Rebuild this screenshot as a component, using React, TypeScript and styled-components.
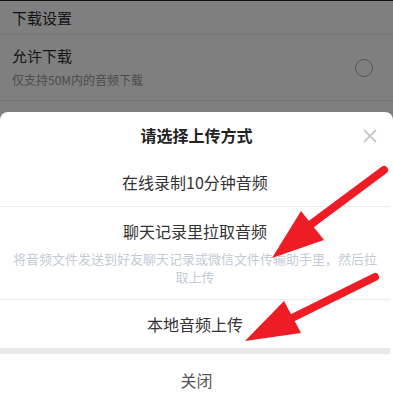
import styled, { createGlobalStyle } from 'styled-components'

const GlobalStyle = createGlobalStyle`
  html, body { margin: 0; padding: 0; }
  body { font-family: "Noto Sans CJK SC", "Liberation Sans", sans-serif; }
`

const Page = styled.div`
  position: relative;
  width: 393px;
  height: 415px;
  overflow: hidden;
  background: #7f7f7f;
  border-top: 1px solid #111;
  box-sizing: border-box;
`

const SectionHead = styled.div`
  height: 33px;
  padding-left: 12px;
  display: flex;
  align-items: center;
  font-size: 15px;
  color: #141414;
  border-bottom: 1px solid #757575;
`

const SettingRow = styled.div`
  height: 65px;
  padding: 0 20px 0 12px;
  display: flex;
  align-items: center;
  justify-content: space-between;
  border-bottom: 1px solid #757575;
`

const SettingText = styled.div`
  display: flex;
  flex-direction: column;
  gap: 6px;
  margin-top: -1px;
`

const SettingTitle = styled.div`
  font-size: 15px;
  color: #151515;
  line-height: 20px;
`

const SettingSub = styled.div`
  font-size: 12px;
  color: #4c4c4c;
  line-height: 16px;
`

const Radio = styled.div`
  width: 16px;
  height: 16px;
  border-radius: 50%;
  border: 1px solid #555;
`

const Sheet = styled.div`
  position: absolute;
  left: 0;
  right: 0;
  bottom: 0;
  height: 303px;
  background: #fff;
  border-radius: 8px 8px 0 0;
  display: flex;
  flex-direction: column;
`

const SheetHead = styled.div`
  position: relative;
  height: 46px;
  display: flex;
  align-items: center;
  justify-content: center;
  font-size: 16px;
  font-weight: bold;
  color: #222;
`

const CloseX = styled.svg`
  position: absolute;
  right: 16px;
  top: 17px;
`

const Option = styled.div<{ $last?: boolean }>`
  padding: 13px 12px;
  margin-right: 3px;
  text-align: center;
  border-bottom: ${p => (p.$last ? 'none' : '1px solid #ececec')};
`

const OptionTitle = styled.div`
  font-size: 16px;
  line-height: 22px;
  color: #333;
`

const OptionHint = styled.div`
  margin-top: 8px;
  font-size: 13px;
  line-height: 18px;
  color: #c5cad5;
`

const Gap = styled.div`
  height: 6px;
  margin-right: 3px;
  background: #e9e9e9;
`

const CloseBtn = styled.div`
  height: 52px;
  display: flex;
  align-items: center;
  justify-content: center;
  font-size: 16px;
  color: #555;
`

const Marks = styled.svg`
  position: absolute;
  left: 0;
  top: 0;
  pointer-events: none;
`

export default function App() {
  return (
    <>
      <GlobalStyle />
      <Page>
        <SectionHead>下载设置</SectionHead>
        <SettingRow>
          <SettingText>
            <SettingTitle>允许下载</SettingTitle>
            <SettingSub>仅支持50M内的音频下载</SettingSub>
          </SettingText>
          <Radio />
        </SettingRow>

        <Sheet>
          <SheetHead>
            请选择上传方式
            <CloseX width="14" height="14" viewBox="0 0 14 14">
              <path d="M1 1L13 13M13 1L1 13" stroke="#c9c9c9" strokeWidth="1.8" />
            </CloseX>
          </SheetHead>
          <Option>
            <OptionTitle>在线录制10分钟音频</OptionTitle>
          </Option>
          <Option>
            <OptionTitle>聊天记录里拉取音频</OptionTitle>
            <OptionHint>将音频文件发送到好友聊天记录或微信文件传输助手里，然后拉取上传</OptionHint>
          </Option>
          <Option $last>
            <OptionTitle>本地音频上传</OptionTitle>
          </Option>
          <Gap />
          <CloseBtn>关闭</CloseBtn>
        </Sheet>

        <Marks width="393" height="415" viewBox="0 0 393 415">
          <line x1="384" y1="169" x2="310" y2="224" stroke="#ee1c25" strokeWidth="8" strokeLinecap="round" />
          <polygon points="272,257 301,210 324,239" fill="#ee1c25" />
          <line x1="375" y1="276" x2="290" y2="318" stroke="#ee1c25" strokeWidth="8" strokeLinecap="round" />
          <polygon points="245,340 284,300 301,332" fill="#ee1c25" />
        </Marks>
      </Page>
    </>
  )
}
